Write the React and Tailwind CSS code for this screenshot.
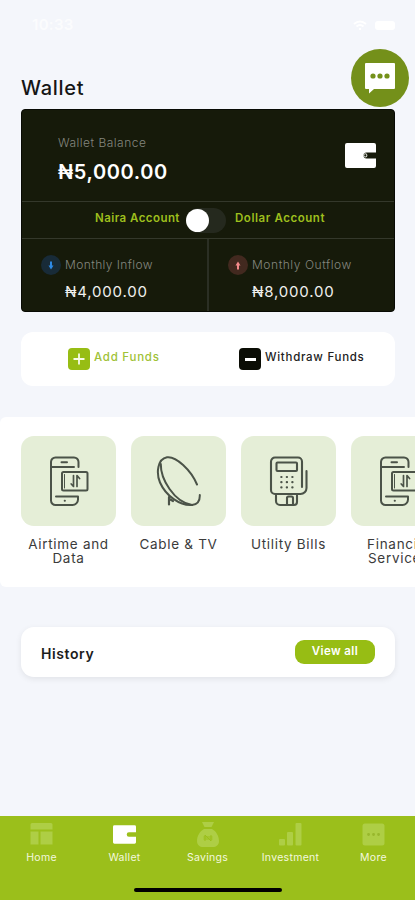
import React from "react";

const ink = "#4b5348";

function PhoneIcon() {
  return (
    <svg width="40" height="52" viewBox="0 0 40 52" fill="none" stroke={ink} strokeWidth="2" strokeLinecap="round" strokeLinejoin="round">
      <path d="M29.500 12V7a4.500 4.500 0 0 0-4.500-4.500H6.500A4.500 4.500 0 0 0 2 7v38.500a4.500 4.500 0 0 0 4.500 4.500h17a5.500 5.500 0 0 0 5.500-5.500v-3H7M2 12h23M12.500 7.200h5.500" />
      <rect x="13" y="17" width="25.500" height="18.500" rx="1.500" />
      <path d="M15.500 19.500v13.500" strokeWidth="1" />
      <path d="M24.500 20.500v11l-2.300-2.500M28 31.500v-11l2.600 3" strokeWidth="1.700" />
      <path d="M15.700 45.700h.2" strokeWidth="2" />
    </svg>
  );
}

function DishIcon() {
  return (
    <svg width="46" height="52" viewBox="0 0 46 52" fill="none" stroke={ink} strokeWidth="2" strokeLinecap="round">
      <path d="M41 29.500C35 15 20 1 11 2.300C1.500 4 0 18 4 27.500C10 41 24 51 36 50C41 49.500 44 46 43.800 40" />
      <path d="M4.800 9C4.500 24 18 47 36 50" />
      <path d="M13 42v7.500M13.500 44l3.500 2" strokeWidth="2.200" />
    </svg>
  );
}

function PosIcon() {
  return (
    <svg width="40" height="52" viewBox="0 0 40 52" fill="none" stroke={ink} strokeWidth="2.100" strokeLinejoin="round" strokeLinecap="round">
      <path d="M33 32V6.500a4 4 0 0 0-4-4H6a4 4 0 0 0-4 4V35a4 4 0 0 0 4 4h25.500a6 6 0 0 0 6-6V16" />
      <rect x="7.500" y="7.500" width="20.500" height="8.500" rx="1" />
      <path d="M7 40.500V46a4 4 0 0 0 4 4h14a3 3 0 0 0 3-3v-6.500M18 49v-6a1.500 1.500 0 0 1 1.500-1.500h3A1.500 1.500 0 0 1 24 43v6" />
      <path d="M12.300 22h.2M17.800 22h.2M23.300 22h.2M12.300 27.200h.2M17.800 27.200h.2M23.300 27.200h.2M12.300 32.400h.2M17.800 32.400h.2M23.300 32.400h.2" strokeWidth="2.200" />
    </svg>
  );
}

function WalletIcon({ className, hole }) {
  return (
    <svg className={className} viewBox="0 0 31 25" fill="none">
      <path d="M2 0h27a2 2 0 0 1 2 2v7.500H21.500a3 3 0 0 0 0 6H31V23a2 2 0 0 1-2 2H2a2 2 0 0 1-2-2V2a2 2 0 0 1 2-2Z" fill="#fff" />
      {hole && <circle cx="20.300" cy="12.400" r="1.600" stroke="#d4d6cf" strokeWidth="1.100" />}
    </svg>
  );
}

function Flow({ label, amount, down, labelClass, amountClass }) {
  return (
    <div className="flex flex-1 flex-col pl-[19px] pt-4">
      <div className="flex h-5 items-center gap-[4px]">
        <span className={down ? "flex size-5 items-center justify-center rounded-full bg-[#182b38]" : "flex size-5 items-center justify-center rounded-full bg-[#42291f]"}>
          <svg width="6" height="9" viewBox="0 0 6 9" className={down ? "" : "rotate-180"}>
            <path d="M2 .5h2v4h1.500L3 8.500.5 4.500H2Z" fill={down ? "#2e8ae6" : "#f38a8a"} />
          </svg>
        </span>
        <span className={"whitespace-nowrap font-light text-[#85877f] " + labelClass}>{label}</span>
      </div>
      <div className={"mt-[7px] whitespace-nowrap pl-[24px] leading-5 text-[#f0f0ee] " + amountClass}>{amount}</div>
    </div>
  );
}

function Service({ icon, lines }) {
  return (
    <div className="flex w-[95px] shrink-0 flex-col items-center">
      <div className="flex h-[90px] w-full items-center justify-center rounded-[13px] bg-[#e5eed7]">{icon}</div>
      <div className="mt-[11px] flex flex-col items-center whitespace-nowrap text-[13.5px] leading-[14px] tracking-[0.7px] text-[#3b3b3b]">
        {lines.map((line) => <span key={line}>{line}</span>)}
      </div>
    </div>
  );
}

function Tab({ label, children }) {
  return (
    <div className="flex w-[83px] flex-col items-center">
      <div className="flex h-[28px] items-center justify-center">{children}</div>
      <span className="mt-[3px] whitespace-nowrap text-[10.5px] leading-[14px] tracking-[0.3px] text-[#f3f8df]">{label}</span>
    </div>
  );
}

const faded = "#aece45";

export default function App() {
  return (
    <div className="relative flex h-[900px] w-[415px] flex-col overflow-hidden bg-[#f4f6fb] font-[Inter,'Noto_Sans',sans-serif]">
      <header className="h-[109px] shrink-0">
        <div className="flex h-[50px] items-center justify-between pl-8 pr-[20px] text-white">
          <span className="text-[15px] font-semibold tracking-[0.3px] text-white/70">10:33</span>
          <div className="flex items-center gap-2">
            <svg width="14" height="10" viewBox="0 0 14 10" fill="none" stroke="#fff" strokeWidth="2">
              <path d="M1 4q6-5 12 0M3.500 6.500q3.500-3 7 0M6 9h2" />
            </svg>
            <span className="h-[9px] w-5 rounded-[3px] bg-white" />
          </div>
        </div>
        <h1 className="pl-[21px] pt-[24px] text-[20px] font-medium leading-7 tracking-[0.7px] text-[#151515]">Wallet</h1>
      </header>
      <div className="absolute left-[351px] top-[49px] flex size-[58px] items-center justify-center rounded-full bg-[#74901a]">
        <svg width="32" height="32" viewBox="0 0 32 32">
          <path d="M2 1h28a1 1 0 0 1 1 1v24a1 1 0 0 1-1 1H10l-5 4.500V27H2a1 1 0 0 1-1-1V2a1 1 0 0 1 1-1Z" fill="#fff" />
          <circle cx="9" cy="14" r="2.600" fill="#74901a" />
          <circle cx="16" cy="14" r="2.600" fill="#74901a" />
          <circle cx="23" cy="14" r="2.600" fill="#74901a" />
        </svg>
      </div>

      <section className="ml-[21px] mr-5 flex h-[203px] shrink-0 flex-col rounded-[4px] border border-[#080a04] bg-[#161a0a]">
        <div className="flex h-[92px] justify-between border-b border-[#34382b] pl-9 pr-[18px]">
          <div className="pt-[24px]">
            <div className="whitespace-nowrap text-[12px] font-light leading-[18px] tracking-[0.48px] text-[#85877f]">Wallet Balance</div>
            <div className="mt-[6px] whitespace-nowrap text-[20px] font-semibold leading-7 tracking-[0.6px] text-white">₦5,000.00</div>
          </div>
          <WalletIcon className="mt-[33px] h-[25px] w-[31px]" hole />
        </div>
        <div className="flex h-[37px] items-center border-b border-[#34382b] pl-[73px] text-[11.5px] font-semibold text-[#9ebf1d]">
          <span className="w-[91px] whitespace-nowrap pb-[3px] tracking-[0.45px]">Naira Account</span>
          <span className="flex h-[25px] w-[40px] items-center rounded-full bg-[#25291e]">
            <span className="size-[23px] rounded-full bg-white" />
          </span>
          <span className="ml-[9px] whitespace-nowrap pb-[3px] tracking-[0.57px]">Dollar Account</span>
        </div>
        <div className="flex flex-1">
          <Flow label="Monthly Inflow" amount="₦4,000.00" down labelClass="text-[12px] tracking-[0.4px]" amountClass="text-[15px] tracking-[0.8px]" />
          <div className="w-[2px] bg-[#2b2f24]" />
          <Flow label="Monthly Outflow" amount="₦8,000.00" labelClass="text-[12px] tracking-[0.55px]" amountClass="text-[15px] tracking-[0.8px]" />
        </div>
      </section>

      <section className="ml-[21px] mr-5 mt-5 flex h-[54px] shrink-0 items-center rounded-[12px] bg-white text-[11.5px] font-medium">
        <div className="flex w-[218px] items-center gap-[4px] pl-[47px]">
          <span className="flex size-[22px] items-center justify-center rounded-[4px] bg-[#97bd14]">
            <svg width="12" height="12" viewBox="0 0 12 12" stroke="#f7fbe8" strokeWidth="1.800"><path d="M6 .5v11M.5 6h11" /></svg>
          </span>
          <span className="whitespace-nowrap pb-[3px] tracking-[0.75px] text-[#a0c237]">Add Funds</span>
        </div>
        <div className="flex items-center gap-[4px]">
          <span className="flex size-[22px] items-center justify-center rounded-[4px] bg-[#0b0d05]">
            <span className="h-[3px] w-[11px] bg-white" />
          </span>
          <span className="whitespace-nowrap pb-[3px] tracking-[0.72px] text-[#222]">Withdraw Funds</span>
        </div>
      </section>

      <section className="mt-[31px] flex h-[170px] shrink-0 gap-[15px] overflow-hidden rounded-l-[6px] bg-white pl-[21px] pt-[19px]">
        <Service icon={<PhoneIcon />} lines={["Airtime and", "Data"]} />
        <Service icon={<DishIcon />} lines={["Cable & TV"]} />
        <Service icon={<PosIcon />} lines={["Utility Bills"]} />
        <Service icon={<PhoneIcon />} lines={["Financial", "Services"]} />
      </section>

      <section className="ml-[21px] mr-5 mt-10 flex h-[50px] shrink-0 items-center justify-between rounded-[13px] bg-white pl-5 pr-5 shadow-[0_2px_6px_rgba(0,0,0,0.08)]">
        <span className="pt-[2px] text-[14px] font-semibold tracking-[0.6px] text-[#1c1c1c]">History</span>
        <button className="h-6 w-20 rounded-[9px] bg-[#97bd14] pb-[3px] text-[11.5px] font-semibold leading-[20px] tracking-[0.4px] text-white">View all</button>
      </section>

      <nav className="mt-auto flex h-[84px] shrink-0 flex-col justify-between bg-[#9bbf1b] pb-2 pt-[4px]">
        <div className="flex">
          <Tab label="Home">
            <svg width="23" height="22" viewBox="0 0 23 22" fill={faded}><path d="M2 0h19a1.500 1.500 0 0 1 1.500 1.500V6.500H.5v-5A1.500 1.500 0 0 1 2 0ZM.5 8.500h8v13h-8ZM10.500 8.500h12v13h-12Z" /></svg>
          </Tab>
          <Tab label="Wallet"><WalletIcon className="h-[19px] w-[23px]" /></Tab>
          <Tab label="Savings">
            <svg width="24" height="27" viewBox="0 0 24 27" fill={faded}>
              <path d="M6 1h12l-2.500 5h-7ZM8 8h8c4 2 7 7 7 12 0 4-3 6-6 6H7c-3 0-6-2-6-6C1 15 4 10 8 8Z" />
              <path d="M9 20v-6l6 6v-6M7.500 16h9M7.500 18h9" fill="none" stroke="#9bbf1b" strokeWidth="1" />
            </svg>
          </Tab>
          <Tab label="Investment">
            <svg width="23" height="23" viewBox="0 0 23 23" fill={faded}><rect x="0" y="16" width="6" height="6.500" rx="1" /><rect x="8" y="9" width="6" height="13.500" rx="1" /><rect x="16.500" y="0" width="6" height="22.500" rx="1" /></svg>
          </Tab>
          <Tab label="More">
            <svg width="23" height="23" viewBox="0 0 23 23"><rect x=".5" y=".5" width="22" height="22" rx="2.500" fill={faded} /><path d="M6.500 11.500h.1M11.500 11.500h.1M16.500 11.500h.1" stroke="#98b72c" strokeWidth="2.800" strokeLinecap="round" /></svg>
          </Tab>
        </div>
        <div className="ml-[134px] h-1 w-[148px] rounded-full bg-black" />
      </nav>
    </div>
  );
}
